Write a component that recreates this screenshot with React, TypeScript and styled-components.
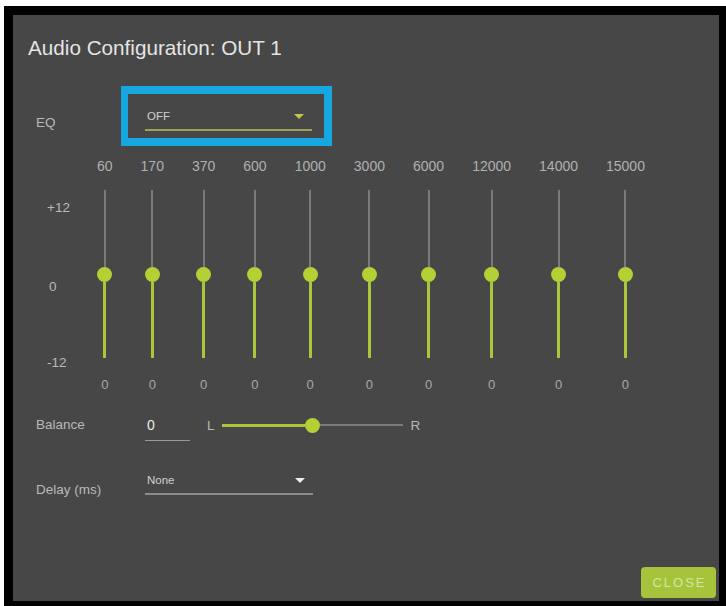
import React from "react";
import styled, { createGlobalStyle } from "styled-components";

const Global = createGlobalStyle`
  html, body { margin: 0; padding: 0; background: #ffffff; }
  body { font-family: "Liberation Sans", Arial, sans-serif; }
  * { box-sizing: border-box; }
`;

const GREEN = "#a9c63c";
const THUMB = "#b3d035";
const TRACK_GRAY = "#7a7a7a";
const LABEL = "#b9b9b9";

const Frame = styled.div`
  margin: 6px 0 0 4px;
  width: 722px;
  height: 600px;
  background: #000;
  padding: 9px 7px 5px 9px;
`;

const Panel = styled.div`
  width: 100%;
  height: 100%;
  background: #474747;
  display: flex;
  flex-direction: column;
  padding: 21px 3px 3px 15px;
`;

const Title = styled.h1`
  margin: 0;
  font-size: 20.7px;
  line-height: 24px;
  font-weight: normal;
  color: #e4e4e4;
`;

const FormRow = styled.div<{ $mt: number }>`
  display: flex;
  align-items: flex-start;
  margin-top: ${(p) => p.$mt}px;
  padding-left: 8px;
`;

const RowLabel = styled.div<{ $pt: number }>`
  width: 109px;
  flex: none;
  padding-top: ${(p) => p.$pt}px;
  font-size: 13.5px;
  line-height: 16px;
  color: ${LABEL};
`;

const Highlight = styled.div`
  margin-left: -24px;
  border: 8px solid #16a7e1;
  border-left-width: 7px;
  padding: 11px 12px 7px 17px;
`;

const Select = styled.div<{ $line: string; $w: number }>`
  width: ${(p) => p.$w}px;
  height: 26px;
  display: flex;
  align-items: center;
  justify-content: space-between;
  padding: 0 8px 2px 2px;
  border-bottom: 2px solid ${(p) => p.$line};
  font-size: 11.5px;
  color: #d0d0d0;
`;

const Caret = styled.span<{ $c: string }>`
  width: 0;
  height: 0;
  border-left: 5px solid transparent;
  border-right: 5px solid transparent;
  border-top: 5px solid ${(p) => p.$c};
`;

const EqArea = styled.div`
  display: flex;
  align-items: flex-start;
  margin-top: 12px;
  padding-left: 19px;
`;

const Scale = styled.div`
  width: 50px;
  flex: none;
  display: flex;
  flex-direction: column;
  padding-top: 42px;
  font-size: 13.5px;
  line-height: 16px;
  color: ${LABEL};
`;

const ScaleMark = styled.span<{ $mt: number; $ml: number }>`
  margin-top: ${(p) => p.$mt}px;
  margin-left: ${(p) => p.$ml}px;
`;

const Bands = styled.div`
  display: flex;
  gap: 28px;
`;

const Band = styled.div`
  display: flex;
  flex-direction: column;
  align-items: center;
`;

const FreqLabel = styled.span`
  font-size: 14px;
  line-height: 16px;
  color: #b0b0b0;
`;

const VTrack = styled.div`
  margin-top: 16px;
  height: 168px;
  width: 15px;
  display: flex;
  flex-direction: column;
  align-items: center;
`;

const VUpper = styled.div`
  flex: 1;
  width: 2px;
  background: ${TRACK_GRAY};
`;

const VLower = styled.div`
  flex: 1;
  width: 3px;
  background: ${GREEN};
`;

const Knob = styled.div`
  width: 15px;
  height: 15px;
  flex: none;
  border-radius: 50%;
  background: ${THUMB};
`;

const ValueLabel = styled.span`
  margin-top: 19px;
  font-size: 13px;
  line-height: 16px;
  color: #a8a8a8;
`;

const BalanceRow = styled.div`
  display: flex;
  align-items: center;
  margin-top: 16px;
  padding-left: 8px;
  height: 32px;
`;

const NumInput = styled.div`
  width: 45px;
  height: 32px;
  padding: 0 0 0 2px;
  display: flex;
  align-items: center;
  border-bottom: 1px solid #9a9a9a;
  font-size: 14px;
  color: #ececec;
`;

const Side = styled.span<{ $ml: number }>`
  margin-left: ${(p) => p.$ml}px;
  font-size: 13.5px;
  color: ${LABEL};
`;

const HSlider = styled.div`
  margin-left: 7px;
  width: 181px;
  height: 14px;
  display: flex;
  align-items: center;
`;

const HFill = styled.div`
  flex: 1;
  height: 3px;
  background: ${GREEN};
`;

const HRest = styled.div`
  flex: 1;
  height: 2px;
  background: ${TRACK_GRAY};
`;

const Spacer = styled.div`
  flex: 1;
`;

const Footer = styled.div`
  display: flex;
  justify-content: flex-end;
`;

const CloseButton = styled.button`
  width: 75px;
  height: 31px;
  border: none;
  border-radius: 4px;
  background: #a6c43b;
  color: #d6e5a3;
  font-family: "Liberation Sans", Arial, sans-serif;
  font-size: 13px;
  letter-spacing: 2px;
  padding: 0 0 0 2px;
`;

const bands = ["60", "170", "370", "600", "1000", "3000", "6000", "12000", "14000", "15000"];

export default function App() {
  return (
    <>
      <Global />
      <Frame>
        <Panel>
          <Title>Audio Configuration: OUT 1</Title>

          <FormRow $mt={26}>
            <RowLabel $pt={29}>EQ</RowLabel>
            <Highlight>
              <Select $line="#9ba15b" $w={167}>
                <span>OFF</span>
                <Caret $c="#c3c64a" />
              </Select>
            </Highlight>
          </FormRow>

          <EqArea>
            <Scale>
              <ScaleMark $mt={0} $ml={0}>+12</ScaleMark>
              <ScaleMark $mt={63} $ml={2}>0</ScaleMark>
              <ScaleMark $mt={60} $ml={0}>-12</ScaleMark>
            </Scale>
            <Bands>
              {bands.map((b) => (
                <Band key={b}>
                  <FreqLabel>{b}</FreqLabel>
                  <VTrack>
                    <VUpper />
                    <Knob />
                    <VLower />
                  </VTrack>
                  <ValueLabel>0</ValueLabel>
                </Band>
              ))}
            </Bands>
          </EqArea>

          <BalanceRow>
            <RowLabel $pt={0}>Balance</RowLabel>
            <NumInput>0</NumInput>
            <Side $ml={17}>L</Side>
            <HSlider>
              <HFill />
              <Knob />
              <HRest />
            </HSlider>
            <Side $ml={8}>R</Side>
          </BalanceRow>

          <FormRow $mt={28}>
            <RowLabel $pt={13}>Delay (ms)</RowLabel>
            <Select $line="#8c8c8c" $w={168}>
              <span>None</span>
              <Caret $c="#eeeeee" />
            </Select>
          </FormRow>

          <Spacer />
          <Footer>
            <CloseButton>CLOSE</CloseButton>
          </Footer>
        </Panel>
      </Frame>
    </>
  );
}
